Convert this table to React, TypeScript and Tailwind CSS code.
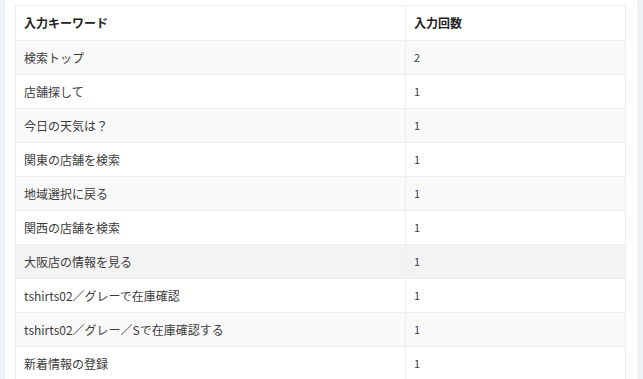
const rows: [string, number][] = [
  ["検索トップ", 2],
  ["店舗探して", 1],
  ["今日の天気は？", 1],
  ["関東の店舗を検索", 1],
  ["地域選択に戻る", 1],
  ["関西の店舗を検索", 1],
  ["大阪店の情報を見る", 1],
  ["tshirts02／グレーで在庫確認", 1],
  ["tshirts02／グレー／Sで在庫確認する", 1],
  ["新着情報の登録", 1],
]

export default function App() {
  return (
    <div
      className="h-[379px] overflow-hidden bg-[#eef1f6] pl-[5px] pr-[6px]"
      style={{ fontFamily: '"Noto Sans CJK JP", "Noto Sans", sans-serif' }}
    >
      <div className="h-full bg-white pt-[5px] pl-[10px] pr-[11px]">
        <table className="w-[611px] table-fixed border-collapse text-[12px] text-[#3c3c3c]">
          <colgroup>
            <col className="w-[390px]" />
            <col />
          </colgroup>
          <thead>
            <tr className="h-[35px]">
              <th className="border border-[#ebeef2] px-[8px] text-left font-bold text-[#222]">入力キーワード</th>
              <th className="border border-[#ebeef2] px-[8px] text-left font-bold text-[#222]">入力回数</th>
            </tr>
          </thead>
          <tbody>
            {rows.map(([kw, n], i) => (
              <tr
                key={kw}
                className={
                  "h-[34px] " +
                  (i === 6 ? "bg-[#f3f3f3]" : i % 2 === 0 ? "bg-[#f9f9f9]" : "bg-white")
                }
              >
                <td className="border border-[#ebeef2] px-[8px]">{kw}</td>
                <td className="border border-[#ebeef2] px-[8px] text-[11px]">{n}</td>
              </tr>
            ))}
          </tbody>
        </table>
      </div>
    </div>
  )
}
